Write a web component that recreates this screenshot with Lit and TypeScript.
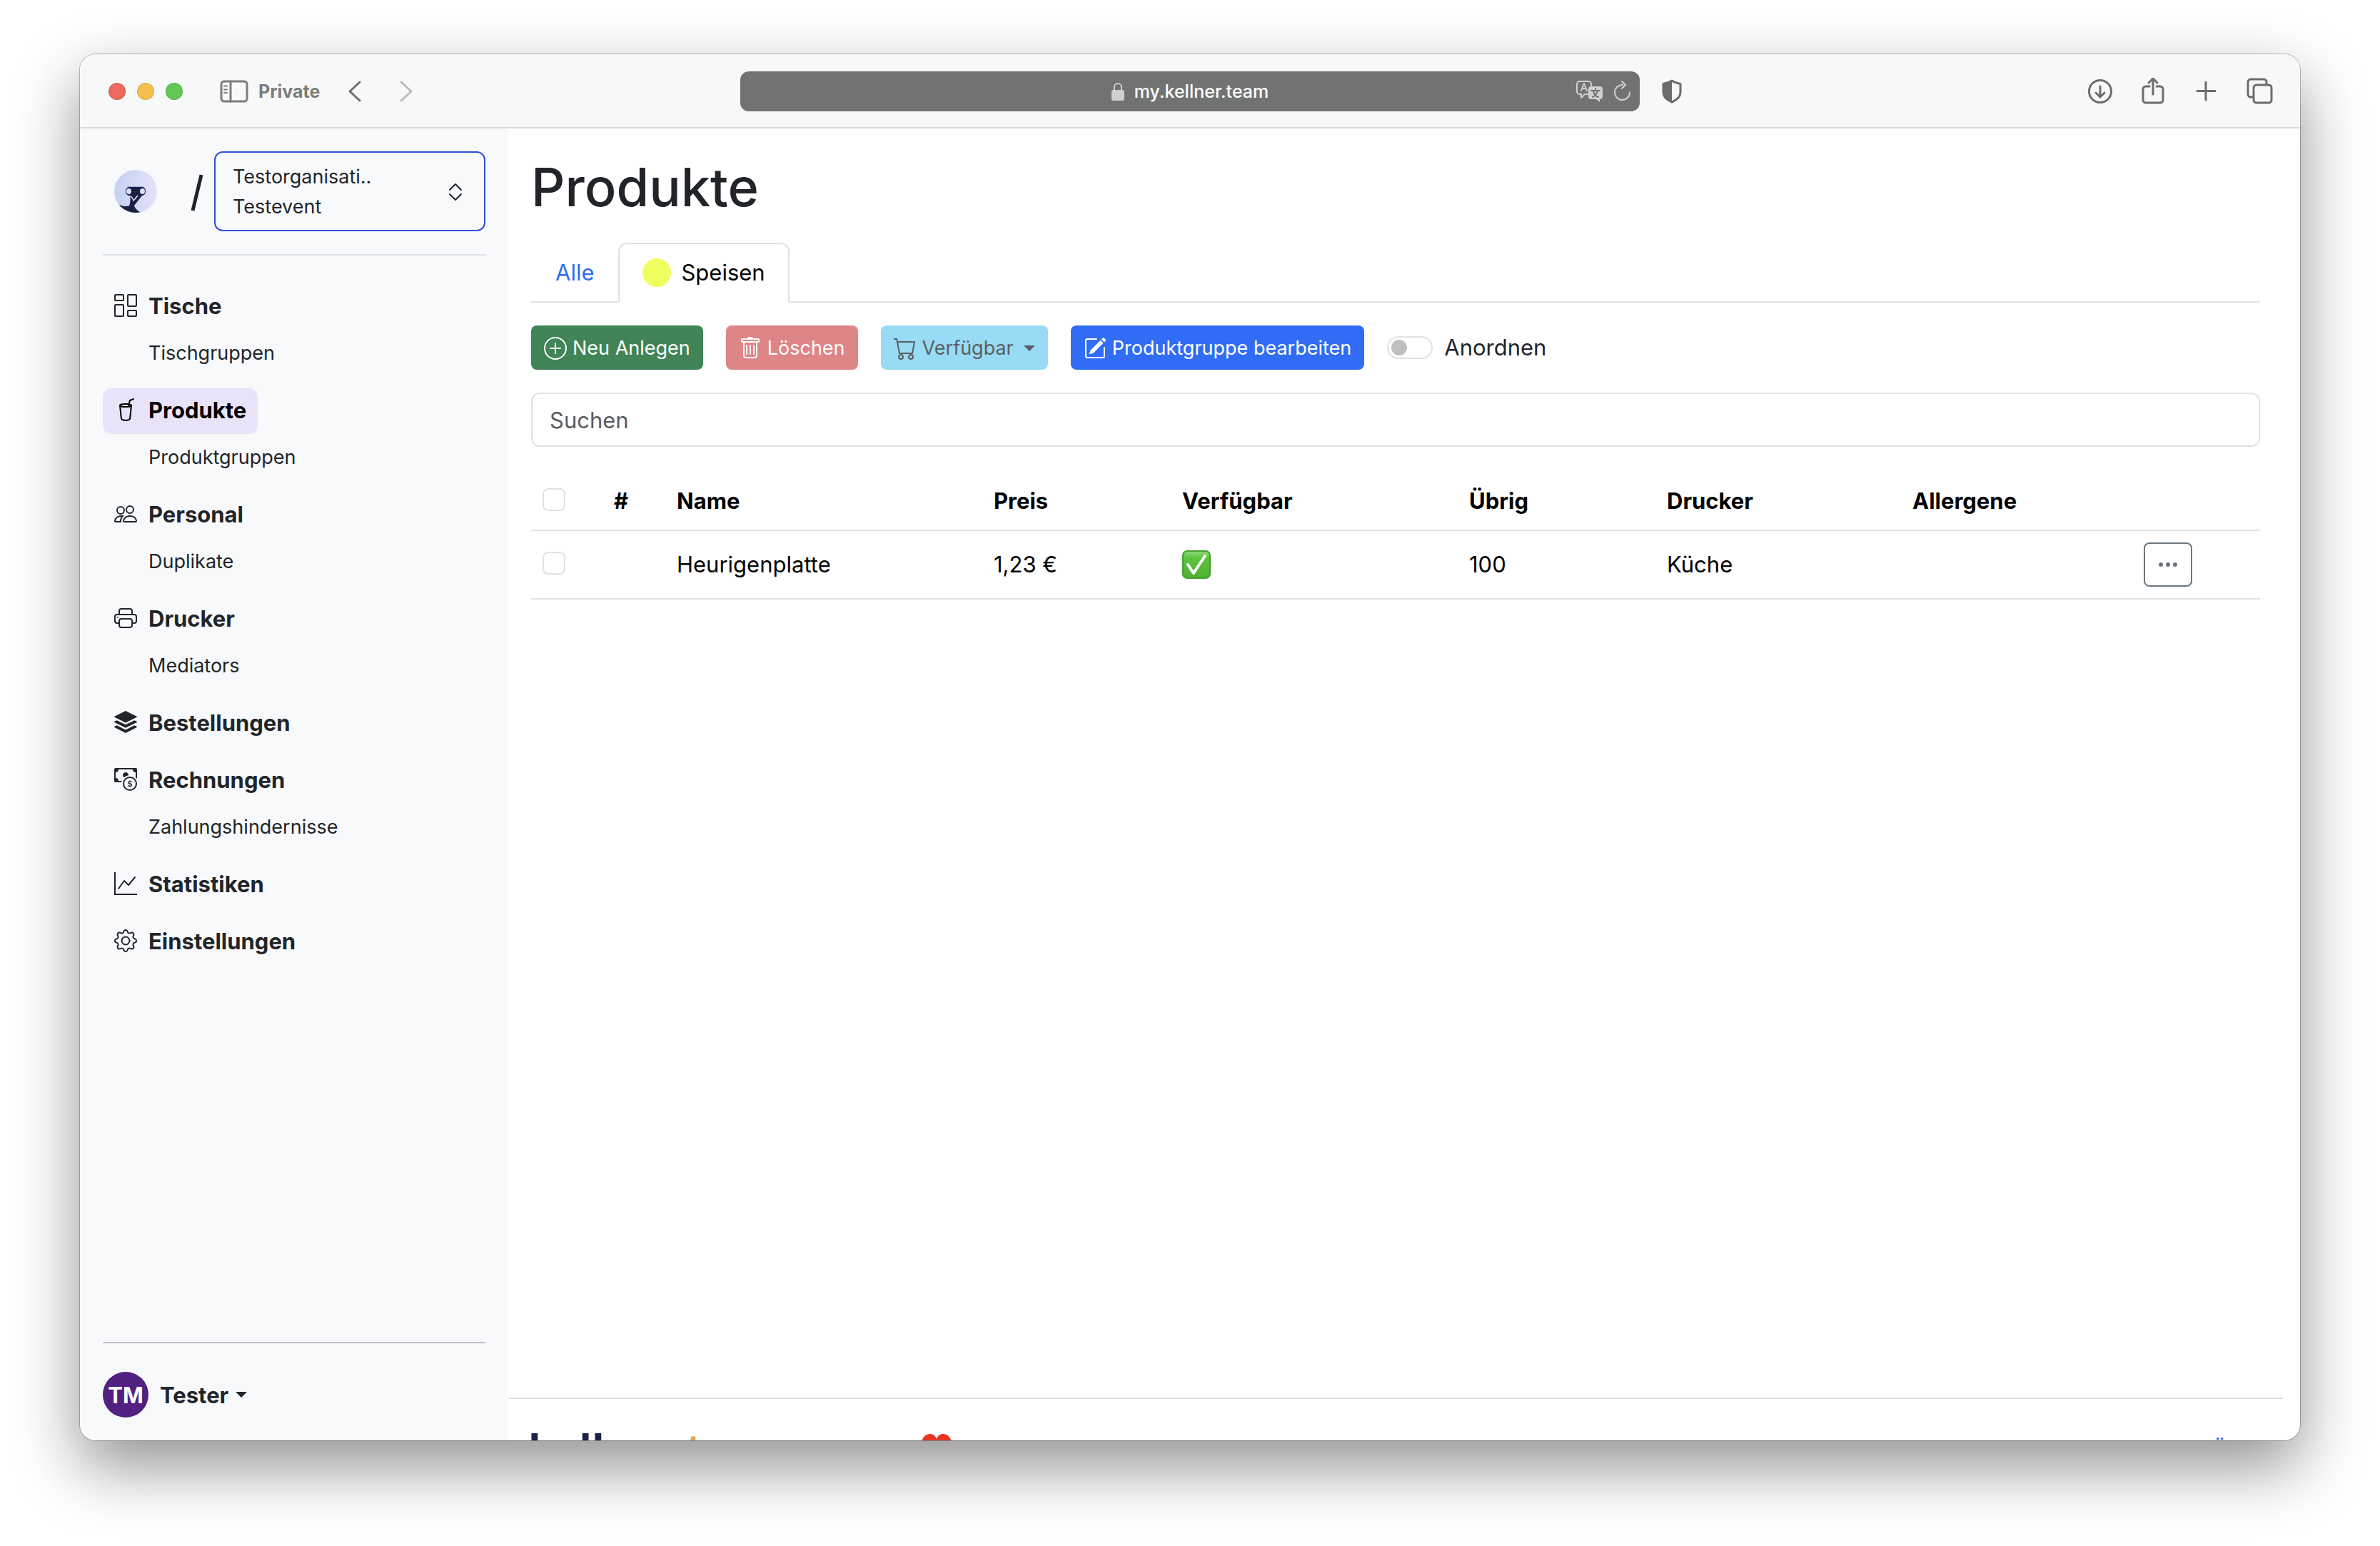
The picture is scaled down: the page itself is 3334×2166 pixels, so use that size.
import { LitElement, html, svg, css, nothing } from "lit";
import { customElement, state } from "lit/decorators.js";

const ICONS: Record<string, string[]> = {
  tables: [
    "M6 1v3H1V1zM1 0a1 1 0 0 0-1 1v3a1 1 0 0 0 1 1h5a1 1 0 0 0 1-1V1a1 1 0 0 0-1-1zm14 12v3h-5v-3zm-5-1a1 1 0 0 0-1 1v3a1 1 0 0 0 1 1h5a1 1 0 0 0 1-1v-3a1 1 0 0 0-1-1zM6 8v7H1V8zM1 7a1 1 0 0 0-1 1v7a1 1 0 0 0 1 1h5a1 1 0 0 0 1-1V8a1 1 0 0 0-1-1zm14-6v7h-5V1zm-5-1a1 1 0 0 0-1 1v7a1 1 0 0 0 1 1h5a1 1 0 0 0 1-1V1a1 1 0 0 0-1-1z",
  ],
  cup: [
    "M13.902.334a.5.5 0 0 1-.28.65l-2.254.902-.4 1.927c.376.095.715.215.972.367.228.135.56.396.56.82q0 .069-.011.132l-.962 9.068a1.28 1.28 0 0 1-.524.93c-.488.34-1.494.87-3.01.87s-2.522-.53-3.01-.87a1.28 1.28 0 0 1-.524-.93L3.51 5.132A1 1 0 0 1 3.5 5c0-.424.332-.685.56-.82.262-.154.607-.276.99-.372C5.824 3.614 6.867 3.5 8 3.5c.712 0 1.389.045 1.985.127l.464-2.215a.5.5 0 0 1 .303-.356l2.5-1a.5.5 0 0 1 .65.278M9.768 4.607A14 14 0 0 0 8 4.5c-1.076 0-2.033.11-2.707.278A3.3 3.3 0 0 0 4.645 5c.146.073.362.15.648.222C5.967 5.39 6.924 5.5 8 5.5c.571 0 1.109-.03 1.588-.085zm.292 1.756C9.445 6.45 8.742 6.5 8 6.5c-1.133 0-2.176-.114-2.95-.308a6 6 0 0 1-.435-.127l.838 8.03c.013.121.06.186.102.215.357.249 1.168.69 2.438.69s2.081-.441 2.439-.69c.042-.029.09-.094.102-.215l.852-8.03a6 6 0 0 1-.435.127 9 9 0 0 1-.89.17zM11.354 5a3 3 0 0 0-.604-.21l-.099.445.055-.013c.286-.072.502-.149.648-.222",
  ],
  people: [
    "M15 14s1 0 1-1-1-4-5-4-5 3-5 4 1 1 1 1zm-7.978-1L7 12.996c.001-.264.167-1.03.76-1.72C8.312 10.629 9.282 10 11 10c1.717 0 2.687.63 3.24 1.276.593.69.758 1.457.76 1.72l-.008.002-.014.002zM11 7a2 2 0 1 0 0-4 2 2 0 0 0 0 4m3-2a3 3 0 1 1-6 0 3 3 0 0 1 6 0M6.936 9.28a6 6 0 0 0-1.23-.247A7 7 0 0 0 5 9c-4 0-5 3-5 4q0 1 1 1h4.216A2.24 2.24 0 0 1 5 13c0-1.01.377-2.042 1.09-2.904.243-.294.526-.569.846-.816M4.92 10A5.5 5.5 0 0 0 4 13H1c0-.26.164-1.03.76-1.724.545-.636 1.492-1.256 3.16-1.275ZM1.5 5.5a3 3 0 1 1 6 0 3 3 0 0 1-6 0m3-2a2 2 0 1 0 0 4 2 2 0 0 0 0-4",
  ],
  printer: [
    "M2.5 8a.5.5 0 1 0 0-1 .5.5 0 0 0 0 1",
    "M5 1a2 2 0 0 0-2 2v2H2a2 2 0 0 0-2 2v3a2 2 0 0 0 2 2h1v1a2 2 0 0 0 2 2h6a2 2 0 0 0 2-2v-1h1a2 2 0 0 0 2-2V7a2 2 0 0 0-2-2h-1V3a2 2 0 0 0-2-2zM4 3a1 1 0 0 1 1-1h6a1 1 0 0 1 1 1v2H4zm1 5a2 2 0 0 0-2 2v1H2a1 1 0 0 1-1-1V7a1 1 0 0 1 1-1h12a1 1 0 0 1 1 1v3a1 1 0 0 1-1 1h-1v-1a2 2 0 0 0-2-2zm7 2v3a1 1 0 0 1-1 1H5a1 1 0 0 1-1-1v-3a1 1 0 0 1 1-1h6a1 1 0 0 1 1 1",
  ],
  stack: [
    "m14.12 10.163 1.715.858c.22.11.22.424 0 .534L8.267 15.34a.6.6 0 0 1-.534 0L.165 11.555a.299.299 0 0 1 0-.534l1.716-.858 5.317 2.659c.505.252 1.1.252 1.604 0l5.317-2.66zM7.733.063a.6.6 0 0 1 .534 0l7.568 3.784a.3.3 0 0 1 0 .535L8.267 8.165a.6.6 0 0 1-.534 0L.165 4.382a.299.299 0 0 1 0-.535z",
    "m14.12 6.576 1.715.858c.22.11.22.424 0 .534l-7.568 3.784a.6.6 0 0 1-.534 0L.165 7.968a.299.299 0 0 1 0-.534l1.716-.858 5.317 2.659c.505.252 1.1.252 1.604 0z",
  ],
  cash: [
    "M11 15a4 4 0 1 0 0-8 4 4 0 0 0 0 8m5-4a5 5 0 1 1-10 0 5 5 0 0 1 10 0",
    "M9.438 11.944c.047.596.518 1.06 1.363 1.116v.44h.375v-.443c.875-.061 1.386-.529 1.386-1.207 0-.618-.39-.936-1.09-1.1l-.296-.07v-1.2c.376.043.614.248.671.532h.658c-.047-.575-.54-1.024-1.329-1.073V8.5h-.375v.45c-.747.073-1.255.522-1.255 1.158 0 .562.378.92 1.007 1.066l.248.061v1.272c-.384-.058-.639-.27-.696-.563h-.668zm1.36-1.354c-.369-.085-.569-.26-.569-.522 0-.294.216-.514.572-.578v1.1zm.432.746c.449.104.655.272.655.569 0 .339-.257.571-.709.614v-1.195z",
    "M1 0a1 1 0 0 0-1 1v8a1 1 0 0 0 1 1h4.083q.088-.517.258-1H3a2 2 0 0 0-2-2V3a2 2 0 0 0 2-2h10a2 2 0 0 0 2 2v3.528c.38.34.717.728 1 1.154V1a1 1 0 0 0-1-1z",
    "M9.998 5.083 10 5a2 2 0 1 0-3.132 1.65 6 6 0 0 1 3.13-1.567",
  ],
  graph: [
    "M0 0h1v15h15v1H0zm14.817 3.113a.5.5 0 0 1 .07.704l-4.5 5.5a.5.5 0 0 1-.74.037L7.06 6.767l-3.656 5.027a.5.5 0 0 1-.808-.588l4-5.5a.5.5 0 0 1 .758-.06l2.609 2.61 4.15-5.073a.5.5 0 0 1 .704-.07",
  ],
  gear: [
    "M8 4.754a3.246 3.246 0 1 0 0 6.492 3.246 3.246 0 0 0 0-6.492M5.754 8a2.246 2.246 0 1 1 4.492 0 2.246 2.246 0 0 1-4.492 0",
    "M9.796 1.343c-.527-1.79-3.065-1.79-3.592 0l-.094.319a.873.873 0 0 1-1.255.52l-.292-.16c-1.64-.892-3.433.902-2.54 2.541l.159.292a.873.873 0 0 1-.52 1.255l-.319.094c-1.79.527-1.79 3.065 0 3.592l.319.094a.873.873 0 0 1 .52 1.255l-.16.292c-.892 1.64.901 3.434 2.541 2.54l.292-.159a.873.873 0 0 1 1.255.52l.094.319c.527 1.79 3.065 1.79 3.592 0l.094-.319a.873.873 0 0 1 1.255-.52l.292.16c1.64.893 3.434-.902 2.54-2.541l-.159-.292a.873.873 0 0 1 .52-1.255l.319-.094c1.79-.527 1.79-3.065 0-3.592l-.319-.094a.873.873 0 0 1-.52-1.255l.16-.292c.893-1.64-.902-3.433-2.541-2.54l-.292.159a.873.873 0 0 1-1.255-.52zm-2.633.283c.246-.835 1.428-.835 1.674 0l.094.319a1.873 1.873 0 0 0 2.693 1.115l.291-.16c.764-.415 1.6.42 1.184 1.185l-.159.292a1.873 1.873 0 0 0 1.116 2.692l.318.094c.835.246.835 1.428 0 1.674l-.319.094a1.873 1.873 0 0 0-1.115 2.693l.16.291c.415.764-.42 1.6-1.185 1.184l-.291-.159a1.873 1.873 0 0 0-2.693 1.116l-.094.318c-.246.835-1.428.835-1.674 0l-.094-.319a1.873 1.873 0 0 0-2.692-1.115l-.292.16c-.764.415-1.6-.42-1.184-1.185l.159-.291A1.873 1.873 0 0 0 1.945 8.93l-.319-.094c-.835-.246-.835-1.428 0-1.674l.319-.094A1.873 1.873 0 0 0 3.06 4.377l-.16-.292c-.415-.764.42-1.6 1.185-1.184l.292.159a1.873 1.873 0 0 0 2.692-1.115z",
  ],
  plus: [
    "M8 15A7 7 0 1 1 8 1a7 7 0 0 1 0 14m0 1A8 8 0 1 0 8 0a8 8 0 0 0 0 16",
    "M8 4a.5.5 0 0 1 .5.5v3h3a.5.5 0 0 1 0 1h-3v3a.5.5 0 0 1-1 0v-3h-3a.5.5 0 0 1 0-1h3v-3A.5.5 0 0 1 8 4",
  ],
  trash: [
    "M5.5 5.5A.5.5 0 0 1 6 6v6a.5.5 0 0 1-1 0V6a.5.5 0 0 1 .5-.5m2.5 0a.5.5 0 0 1 .5.5v6a.5.5 0 0 1-1 0V6a.5.5 0 0 1 .5-.5m3 .5a.5.5 0 0 0-1 0v6a.5.5 0 0 0 1 0z",
    "M14.5 3a1 1 0 0 1-1 1H13v9a2 2 0 0 1-2 2H5a2 2 0 0 1-2-2V4h-.5a1 1 0 0 1-1-1V2a1 1 0 0 1 1-1H6a1 1 0 0 1 1-1h2a1 1 0 0 1 1 1h3.5a1 1 0 0 1 1 1zM4.118 4 4 4.059V13a1 1 0 0 0 1 1h6a1 1 0 0 0 1-1V4.059L11.882 4zM2.5 3h11V2h-11z",
  ],
  cart: [
    "M0 1.5A.5.5 0 0 1 .5 1H2a.5.5 0 0 1 .485.379L2.89 3H14.5a.5.5 0 0 1 .491.592l-1.5 8A.5.5 0 0 1 13 12H4a.5.5 0 0 1-.491-.408L2.01 3.607 1.61 2H.5a.5.5 0 0 1-.5-.5M3.102 4l1.313 7h8.17l1.313-7zM5 12a2 2 0 1 0 0 4 2 2 0 0 0 0-4m7 0a2 2 0 1 0 0 4 2 2 0 0 0 0-4m-7 1a1 1 0 1 1 0 2 1 1 0 0 1 0-2m7 0a1 1 0 1 1 0 2 1 1 0 0 1 0-2",
  ],
  pencil: [
    "M15.502 1.94a.5.5 0 0 1 0 .706L14.459 3.69l-2-2L13.502.646a.5.5 0 0 1 .707 0l1.293 1.293zm-1.75 2.456-2-2L4.939 9.21a.5.5 0 0 0-.121.196l-.805 2.414a.25.25 0 0 0 .316.316l2.414-.805a.5.5 0 0 0 .196-.12l6.813-6.814z",
    "M1 13.5A1.5 1.5 0 0 0 2.5 15h11a1.5 1.5 0 0 0 1.5-1.5v-6a.5.5 0 0 0-1 0v6a.5.5 0 0 1-.5.5h-11a.5.5 0 0 1-.5-.5v-11a.5.5 0 0 1 .5-.5H9a.5.5 0 0 0 0-1H2.5A1.5 1.5 0 0 0 1 2.5z",
  ],
  dots: [
    "M3 9.5a1.5 1.5 0 1 1 0-3 1.5 1.5 0 0 1 0 3m5 0a1.5 1.5 0 1 1 0-3 1.5 1.5 0 0 1 0 3m5 0a1.5 1.5 0 1 1 0-3 1.5 1.5 0 0 1 0 3",
  ],
  expand: [
    "M3.646 9.146a.5.5 0 0 1 .708 0L8 12.793l3.646-3.647a.5.5 0 0 1 .708.708l-4 4a.5.5 0 0 1-.708 0l-4-4a.5.5 0 0 1 0-.708m0-2.292a.5.5 0 0 0 .708 0L8 3.207l3.646 3.647a.5.5 0 0 0 .708-.708l-4-4a.5.5 0 0 0-.708 0l-4 4a.5.5 0 0 0 0 .708",
  ],
};

const icon = (name: string) => html`<svg class="icon" viewBox="0 0 16 16" fill="currentColor" fill-rule="evenodd" aria-hidden="true">
  ${ICONS[name].map((d) => svg`<path d=${d}></path>`)}
</svg>`;

interface NavItem {
  label: string;
  icon: string;
  sub?: string;
  active?: boolean;
}

const NAV: NavItem[] = [
  { label: "Tische", icon: "tables", sub: "Tischgruppen" },
  { label: "Produkte", icon: "cup", sub: "Produktgruppen", active: true },
  { label: "Personal", icon: "people", sub: "Duplikate" },
  { label: "Drucker", icon: "printer", sub: "Mediators" },
  { label: "Bestellungen", icon: "stack" },
  { label: "Rechnungen", icon: "cash", sub: "Zahlungshindernisse" },
  { label: "Statistiken", icon: "graph" },
  { label: "Einstellungen", icon: "gear" },
];

const base = css`
  *,
  *::before,
  *::after {
    box-sizing: border-box;
  }
  button,
  input {
    font: inherit;
    color: inherit;
    margin: 0;
  }
  button {
    background: none;
    border: 0;
    padding: 0;
  }
  a {
    color: inherit;
    text-decoration: none;
  }
  .icon {
    display: block;
    width: 32px;
    height: 32px;
    flex: none;
  }
`;

@customElement("browser-toolbar")
export class BrowserToolbar extends LitElement {
  static styles = [
    base,
    css`
      :host {
        display: block;
      }
      .bar {
        display: grid;
        grid-template-columns: 1fr minmax(0, 1260px) 1fr;
        align-items: center;
        height: 104px;
        padding: 2px 38px 0;
        background: #f7f9f8;
        border-bottom: 2px solid #d9dbda;
        color: #6b6d6c;
        font-size: 25px;
      }
      .side {
        display: flex;
        align-items: center;
      }
      .end {
        justify-content: space-between;
        padding-left: 28px;
      }
      .actions {
        display: flex;
        align-items: center;
        gap: 38px;
      }
      .lights {
        display: flex;
        gap: 16px;
        margin: 0 52px 0 2px;
      }
      .light {
        width: 24px;
        height: 24px;
        border-radius: 50%;
        border: 1px solid rgba(0, 0, 0, 0.12);
      }
      .close {
        background: #ed6a5f;
      }
      .minimize {
        background: #f5bf4f;
      }
      .zoom {
        background: #62c655;
      }
      .private {
        display: flex;
        align-items: center;
        gap: 14px;
        margin-right: 36px;
        font-weight: 700;
        color: #7b7d7c;
      }
      .chevrons {
        display: flex;
        gap: 46px;
      }
      .forward {
        color: #b9bbba;
      }
      svg {
        display: block;
        fill: none;
        stroke: currentColor;
        stroke-width: 3;
        stroke-linecap: round;
        stroke-linejoin: round;
      }
      .solid {
        fill: currentColor;
        stroke: none;
      }
      .address {
        display: grid;
        grid-template-columns: 1fr auto 1fr;
        align-items: center;
        height: 56px;
        padding: 0 12px;
        border-radius: 12px;
        background: #717372;
        color: #cfd1d0;
      }
      .location {
        grid-column: 2;
        display: flex;
        align-items: center;
        gap: 14px;
      }
      .url {
        field-sizing: content;
        padding: 0;
        border: 0;
        outline: 0;
        background: none;
        color: #fff;
        font-weight: 500;
      }
      .tools {
        display: flex;
        justify-content: flex-end;
        align-items: center;
        gap: 12px;
      }
    `,
  ];

  render() {
    return html`
      <header class="bar">
        <div class="side">
          <div class="lights">
            <span class="light close"></span><span class="light minimize"></span><span class="light zoom"></span>
          </div>
          <button class="private">
            <svg width="40" height="32" viewBox="0 0 40 32">
              <rect x="2" y="2" width="36" height="28" rx="4"></rect>
              <path d="M15 2v28"></path>
              <path d="M6 8.500h4M6 13.500h4M6 18h4" stroke-width="2"></path>
            </svg>
            Private
          </button>
          <div class="chevrons">
            <button aria-label="Zurück">
              <svg width="26" height="32" viewBox="0 0 26 32"><path d="M20 3 6 16l14 13"></path></svg>
            </button>
            <button class="forward" aria-label="Vorwärts">
              <svg width="26" height="32" viewBox="0 0 26 32"><path d="M6 3l14 13L6 29"></path></svg>
            </button>
          </div>
        </div>
        <div class="address">
          <div class="location">
            <svg width="18" height="26" viewBox="0 0 18 26">
              <path d="M4 12V7a5 5 0 0 1 10 0v5" stroke-width="2"></path>
              <rect class="solid" x="0" y="11" width="18" height="15" rx="3"></rect>
            </svg>
            <input class="url" type="text" aria-label="Adresse" .value=${"my.kellner.team"} size="13" />
          </div>
          <div class="tools">
            <button aria-label="Übersetzen">
              <svg width="40" height="32" viewBox="0 0 40 32" stroke-width="2">
                <path
                  stroke-width="2"
                  d="M17 20h-4l-5 5v-5H6a4 4 0 0 1-4-4V6a4 4 0 0 1 4-4h12a4 4 0 0 1 4 4v2"
                ></path>
                <path stroke-width="2" d="M8 15l4-10 4 10M9.500 12h5"></path>
                <path
                  class="solid"
                  d="M22 9h12a4 4 0 0 1 4 4v10a4 4 0 0 1-4 4v4l-5-4h-7a4 4 0 0 1-4-4V13a4 4 0 0 1 4-4z"
                ></path>
                <path stroke="#717372" stroke-width="2" d="M28 12v3M22 15h12M24 24c4-2 6-5 7-9M25 16c1 4 4 7 7 8"></path>
              </svg>
            </button>
            <button aria-label="Neu laden">
              <svg width="26" height="32" viewBox="0 0 26 32">
                <path stroke-width="2" d="M14 7a10.500 10.500 0 1 0 10 10.500M13 2l5 5-5 5"></path>
              </svg>
            </button>
          </div>
        </div>
        <div class="side end">
          <button aria-label="Datenschutz">
            <svg width="34" height="36" viewBox="0 0 34 36">
              <path d="M17 3c3 2 7 3.500 12 4.500v12c0 6-5 10.500-12 13.500C10 30 5 25.500 5 19.500v-12C10 6.500 14 5 17 3z"></path>
              <path class="solid" d="M17 3c-3 2-7 3.500-12 4.500v12c0 6 5 10.500 12 13.500z"></path>
            </svg>
          </button>
          <div class="actions">
            <button aria-label="Downloads">
              <svg width="36" height="38" viewBox="0 0 36 38">
                <circle cx="18" cy="19" r="15.500"></circle>
                <path d="M18 12v14M12 21l6 6 6-6"></path>
              </svg>
            </button>
            <button aria-label="Teilen">
              <svg width="36" height="38" viewBox="0 0 36 38">
                <path d="M13 12H8a4 4 0 0 0-4 4v15a4 4 0 0 0 4 4h20a4 4 0 0 0 4-4V16a4 4 0 0 0-4-4h-5"></path>
                <path d="M18 23V2M12 7l6-6 6 6"></path>
              </svg>
            </button>
            <button aria-label="Neuer Tab">
              <svg width="36" height="38" viewBox="0 0 36 38"><path d="M18 6v25M6 18.500h25"></path></svg>
            </button>
            <button aria-label="Tabübersicht">
              <svg width="38" height="38" viewBox="0 0 38 38">
                <path d="M10 27H7a4 4 0 0 1-4-4V6a4 4 0 0 1 4-4h18a4 4 0 0 1 4 4v3"></path>
                <rect x="11" y="10" width="25" height="25" rx="4"></rect>
              </svg>
            </button>
          </div>
        </div>
      </header>
    `;
  }
}

@customElement("side-nav")
export class SideNav extends LitElement {
  static styles = [
    base,
    css`
      :host {
        display: flex;
        flex-direction: column;
        padding: 32px;
        background: #f8f9fb;
        color: #212529;
      }
      .head {
        display: flex;
        align-items: center;
        padding: 0 0 32px 16px;
        border-bottom: 2px solid #dee2e6;
      }
      .logo {
        display: block;
        width: 60px;
        height: 60px;
      }
      .slash {
        width: 20px;
        height: 52px;
        margin: 4px 14px 0 46px;
      }
      .event {
        display: flex;
        flex: 1;
        align-items: center;
        justify-content: space-between;
        height: 112px;
        padding: 2px 24px 0;
        border: 2px solid #2f50d0;
        border-radius: 12px;
        text-align: left;
        font-size: 27px;
        line-height: 42px;
      }
      .lines {
        display: grid;
      }
      .nav {
        display: flex;
        flex-direction: column;
        gap: 16px;
        margin-top: 40px;
      }
      .group {
        display: flex;
        flex-direction: column;
        align-items: flex-start;
      }
      .item {
        display: flex;
        align-items: center;
        gap: 16px;
        height: 64px;
        padding: 0 16px 4px;
        border-radius: 12px;
        font-size: 31px;
        font-weight: 700;
      }
      .active {
        background: #e9e3f9;
        color: #000;
      }
      .sub {
        padding: 12px 16px 12px 64px;
        font-size: 27px;
        line-height: 42px;
      }
      .user {
        display: flex;
        align-items: center;
        gap: 16px;
        margin-top: auto;
        padding-top: 40px;
        border-top: 2px solid #bfc1c5;
        font-size: 31px;
        font-weight: 700;
      }
      .avatar {
        display: grid;
        place-items: center;
        width: 64px;
        height: 64px;
        border-radius: 50%;
        background: #512080;
        color: #fff;
      }
      .menu {
        display: flex;
        align-items: center;
        gap: 10px;
      }
      .caret {
        border: 8px solid transparent;
        border-top-color: currentColor;
        border-bottom: 0;
      }
    `,
  ];

  render() {
    return html`
      <div class="head">
        <svg class="logo" viewBox="0 0 60 60" aria-hidden="true">
          <defs>
            <linearGradient id="sky">
              <stop offset="0" stop-color="#c6cff5"></stop>
              <stop offset="1" stop-color="#e3e3f9"></stop>
            </linearGradient>
            <clipPath id="disc"><circle cx="30" cy="30" r="30"></circle></clipPath>
          </defs>
          <circle cx="30" cy="30" r="30" fill="url(#sky)"></circle>
          <g clip-path="url(#disc)">
            <path fill="#9fb0dc" d="M18 23h24v3H18z"></path>
            <path
              fill="#1b2146"
              d="M7 49c5 2 11 3 14 1 2-4 1-9 2-14h-3a6.500 6.500 0 0 1 0-12h20a6.500 6.500 0 0 1 0 12h-1l-11 14c1 4 5 7 9 10v2H10z"
            ></path>
            <ellipse cx="20.500" cy="30" rx="3.500" ry="4" fill="#dcdff8"></ellipse>
            <ellipse cx="39.500" cy="30" rx="3.500" ry="4" fill="#dcdff8"></ellipse>
            <path fill="none" stroke="#dcdff8" stroke-width="1.500" d="M24 37l3 6 5-6M28 42l5-6"></path>
          </g>
        </svg>
        <svg class="slash" viewBox="0 0 20 52" aria-hidden="true">
          <path d="M4 51 16 1" fill="none" stroke="#212529" stroke-width="5"></path>
        </svg>
        <button class="event">
          <span class="lines"><span>Testorganisati..</span><span>Testevent</span></span>
          ${icon("expand")}
        </button>
      </div>
      <nav class="nav">
        ${NAV.map(
          (n) => html`<div class="group">
            <a class="item ${n.active ? "active" : ""}" href="#">${icon(n.icon)}<span>${n.label}</span></a>
            ${n.sub ? html`<a class="sub" href="#">${n.sub}</a>` : nothing}
          </div>`
        )}
      </nav>
      <div class="user">
        <span class="avatar">TM</span>
        <button class="menu">Tester<span class="caret"></span></button>
      </div>
    `;
  }
}

@customElement("product-page")
export class ProductPage extends LitElement {
  @state() private arranging = false;

  static styles = [
    base,
    css`
      :host {
        display: flex;
        flex-direction: column;
        min-width: 0;
        min-height: 0;
        margin-right: 24px;
        overflow: hidden;
        color: #212529;
        font-size: 31px;
        line-height: 48px;
      }
      .content {
        flex: 1;
        min-height: 0;
        padding: 34px 32px 0;
      }
      .title {
        margin: 0 0 30px;
        font-size: 74px;
        font-weight: 500;
        line-height: 96px;
      }
      .tabs {
        display: flex;
        height: 84px;
        border-bottom: 2px solid #dee2e6;
      }
      .tab {
        display: flex;
        align-items: center;
        gap: 14px;
        height: 84px;
        padding: 0 32px;
        border: 2px solid transparent;
        border-radius: 12px 12px 0 0;
        color: #2f6af6;
      }
      .selected {
        border-color: #dee2e6 #dee2e6 #fff;
        background: #fff;
        color: #000;
      }
      .dot {
        width: 40px;
        height: 40px;
        border-radius: 50%;
        background: #efff5f;
      }
      .actions {
        display: flex;
        flex-wrap: wrap;
        align-items: center;
        gap: 32px;
        margin: 32px 0;
      }
      .btn {
        display: flex;
        align-items: center;
        gap: 8px;
        height: 62px;
        padding: 2px 18px 0;
        border-radius: 8px;
        color: #fff;
        font-size: 27px;
      }
      .success {
        background: #408458;
      }
      .danger {
        background: #de8588;
      }
      .info {
        background: #98dbf4;
        color: #5b5f61;
      }
      .primary {
        background: #316cf5;
      }
      .btn:disabled {
        cursor: default;
      }
      .caret {
        margin-left: 6px;
        border: 8px solid transparent;
        border-top-color: currentColor;
        border-bottom: 0;
      }
      .switch {
        display: flex;
        align-items: center;
        gap: 16px;
      }
      .toggle {
        appearance: none;
        display: flex;
        align-items: center;
        width: 64px;
        height: 32px;
        padding: 0 4px;
        border: 2px solid #dee2e6;
        border-radius: 16px;
        background: #fff;
      }
      .toggle::before {
        content: "";
        width: 22px;
        height: 22px;
        border-radius: 50%;
        background: #bfbfbf;
      }
      .toggle:checked {
        justify-content: flex-end;
      }
      .search {
        display: block;
        width: 100%;
        height: 76px;
        padding: 0 24px;
        border: 2px solid #dee2e6;
        border-radius: 12px;
        background: #fff;
      }
      .search::placeholder {
        color: #595c5f;
        opacity: 1;
      }
      .products {
        width: 100%;
        margin-top: 36px;
        border-collapse: separate;
        border-spacing: 0;
        table-layout: fixed;
        color: #000;
      }
      .products th,
      .products td {
        padding: 16px;
        border-bottom: 2px solid #dee2e6;
        text-align: left;
        vertical-align: middle;
      }
      .products th {
        font-weight: 700;
      }
      .products .pick {
        padding-bottom: 20px;
      }
      .c-pick {
        width: 100px;
      }
      .c-no {
        width: 88px;
      }
      .c-name {
        width: 444px;
      }
      .c-price {
        width: 264px;
      }
      .c-avail {
        width: 402px;
      }
      .c-left {
        width: 277px;
      }
      .c-printer {
        width: 344px;
      }
      .c-allergen {
        width: 324px;
      }
      .c-more {
        width: 179px;
      }
      .check {
        appearance: none;
        display: block;
        width: 32px;
        height: 32px;
        border: 2px solid #dee2e6;
        border-radius: 8px;
        background: #fff;
      }
      .yes {
        display: block;
        width: 40px;
        height: 40px;
      }
      .options {
        display: grid;
        place-items: center;
        width: 68px;
        height: 62px;
        border: 2px solid #6c757d;
        border-radius: 8px;
        color: #6c757d;
      }
      .footer {
        display: flex;
        align-items: flex-start;
        flex: 0 0 60px;
        height: 60px;
        padding: 37px 32px 0 28px;
        border-top: 2px solid #dee2e6;
      }
      .brand {
        width: 551px;
        font-family: "Liberation Sans", sans-serif;
        font-size: 64px;
        font-weight: 700;
        line-height: 72px;
        color: #1b2146;
      }
      .tld {
        color: #e8a05c;
      }
      .heart {
        width: 42px;
        height: 40px;
        margin-top: 10px;
      }
      .about {
        margin: 10px 0 0 auto;
        color: #2f6af6;
        font-size: 29px;
      }
    `,
  ];

  private toggle() {
    this.arranging = !this.arranging;
  }

  render() {
    return html`
      <section class="content">
        <h1 class="title">Produkte</h1>
        <nav class="tabs">
          <a class="tab" href="#">Alle</a>
          <a class="tab selected" href="#" aria-current="page"><span class="dot"></span>Speisen</a>
        </nav>
        <div class="actions">
          <button class="btn success">${icon("plus")}Neu Anlegen</button>
          <button class="btn danger" disabled>${icon("trash")}Löschen</button>
          <button class="btn info" disabled>${icon("cart")}Verfügbar<span class="caret"></span></button>
          <button class="btn primary">${icon("pencil")}Produktgruppe bearbeiten</button>
          <div class="switch">
            <input
              class="toggle"
              type="checkbox"
              role="switch"
              id="arrange"
              .checked=${this.arranging}
              @change=${this.toggle}
            />
            <label for="arrange">Anordnen</label>
          </div>
        </div>
        <input class="search" type="search" placeholder="Suchen" aria-label="Suchen" />
        <table class="products">
          <colgroup>
            <col class="c-pick" />
            <col class="c-no" />
            <col class="c-name" />
            <col class="c-price" />
            <col class="c-avail" />
            <col class="c-left" />
            <col class="c-printer" />
            <col class="c-allergen" />
            <col class="c-more" />
          </colgroup>
          <thead>
            <tr>
              <th class="pick"><input class="check" type="checkbox" aria-label="Alle auswählen" /></th>
              <th>#</th>
              <th>Name</th>
              <th>Preis</th>
              <th>Verfügbar</th>
              <th>Übrig</th>
              <th>Drucker</th>
              <th>Allergene</th>
              <th></th>
            </tr>
          </thead>
          <tbody>
            <tr>
              <td class="pick"><input class="check" type="checkbox" aria-label="Heurigenplatte auswählen" /></td>
              <td></td>
              <td>Heurigenplatte</td>
              <td>1,23 €</td>
              <td>
                <svg class="yes" viewBox="0 0 40 40" role="img" aria-label="Ja">
                  <defs>
                    <linearGradient id="green" x2="0" y2="1">
                      <stop offset="0" stop-color="#8fdc7c"></stop>
                      <stop offset="0.250" stop-color="#5cc43e"></stop>
                      <stop offset="1" stop-color="#4fae31"></stop>
                    </linearGradient>
                  </defs>
                  <rect x="1" y="1" width="38" height="38" rx="6" fill="url(#green)" stroke="#46a035" stroke-width="2"></rect>
                  <path
                    d="M8 20l8 12L32 8"
                    fill="none"
                    stroke="#fff"
                    stroke-width="4"
                    stroke-linecap="round"
                    stroke-linejoin="round"
                  ></path>
                </svg>
              </td>
              <td>100</td>
              <td>Küche</td>
              <td></td>
              <td><button class="options" aria-label="Optionen">${icon("dots")}</button></td>
            </tr>
          </tbody>
        </table>
      </section>
      <footer class="footer">
        <div class="brand">kellner<span class="tld">.team</span></div>
        <svg class="heart" viewBox="0 0 42 40" aria-hidden="true">
          <path
            fill="#ea3323"
            d="M21 9C19 4 16 2 12 2 5 2 0 8 0 15c0 10 10 17 21 25 11-8 21-15 21-25C42 8 37 2 30 2c-4 0-7 2-9 7z"
          ></path>
        </svg>
        <a class="about" href="#">Über</a>
      </footer>
    `;
  }
}

@customElement("app-root")
export class AppRoot extends LitElement {
  static styles = [
    base,
    css`
      :host {
        display: block;
        background: #fff;
        font-family: Inter, "Liberation Sans", sans-serif;
      }
      .stage {
        display: flex;
        height: 100vh;
        padding: 76px 112px 148px;
        overflow: hidden;
      }
      .window {
        display: flex;
        flex: 1;
        flex-direction: column;
        min-width: 0;
        overflow: hidden;
        border-radius: 22px;
        background: #fff;
        box-shadow:
          0 0 0 1px rgba(0, 0, 0, 0.24),
          0 36px 90px rgba(0, 0, 0, 0.44);
      }
      .body {
        display: grid;
        flex: 1;
        grid-template-columns: 600px minmax(0, 1fr);
        min-height: 0;
      }
    `,
  ];

  render() {
    return html`
      <div class="stage">
        <div class="window">
          <browser-toolbar></browser-toolbar>
          <div class="body">
            <side-nav></side-nav>
            <product-page></product-page>
          </div>
        </div>
      </div>
    `;
  }
}
